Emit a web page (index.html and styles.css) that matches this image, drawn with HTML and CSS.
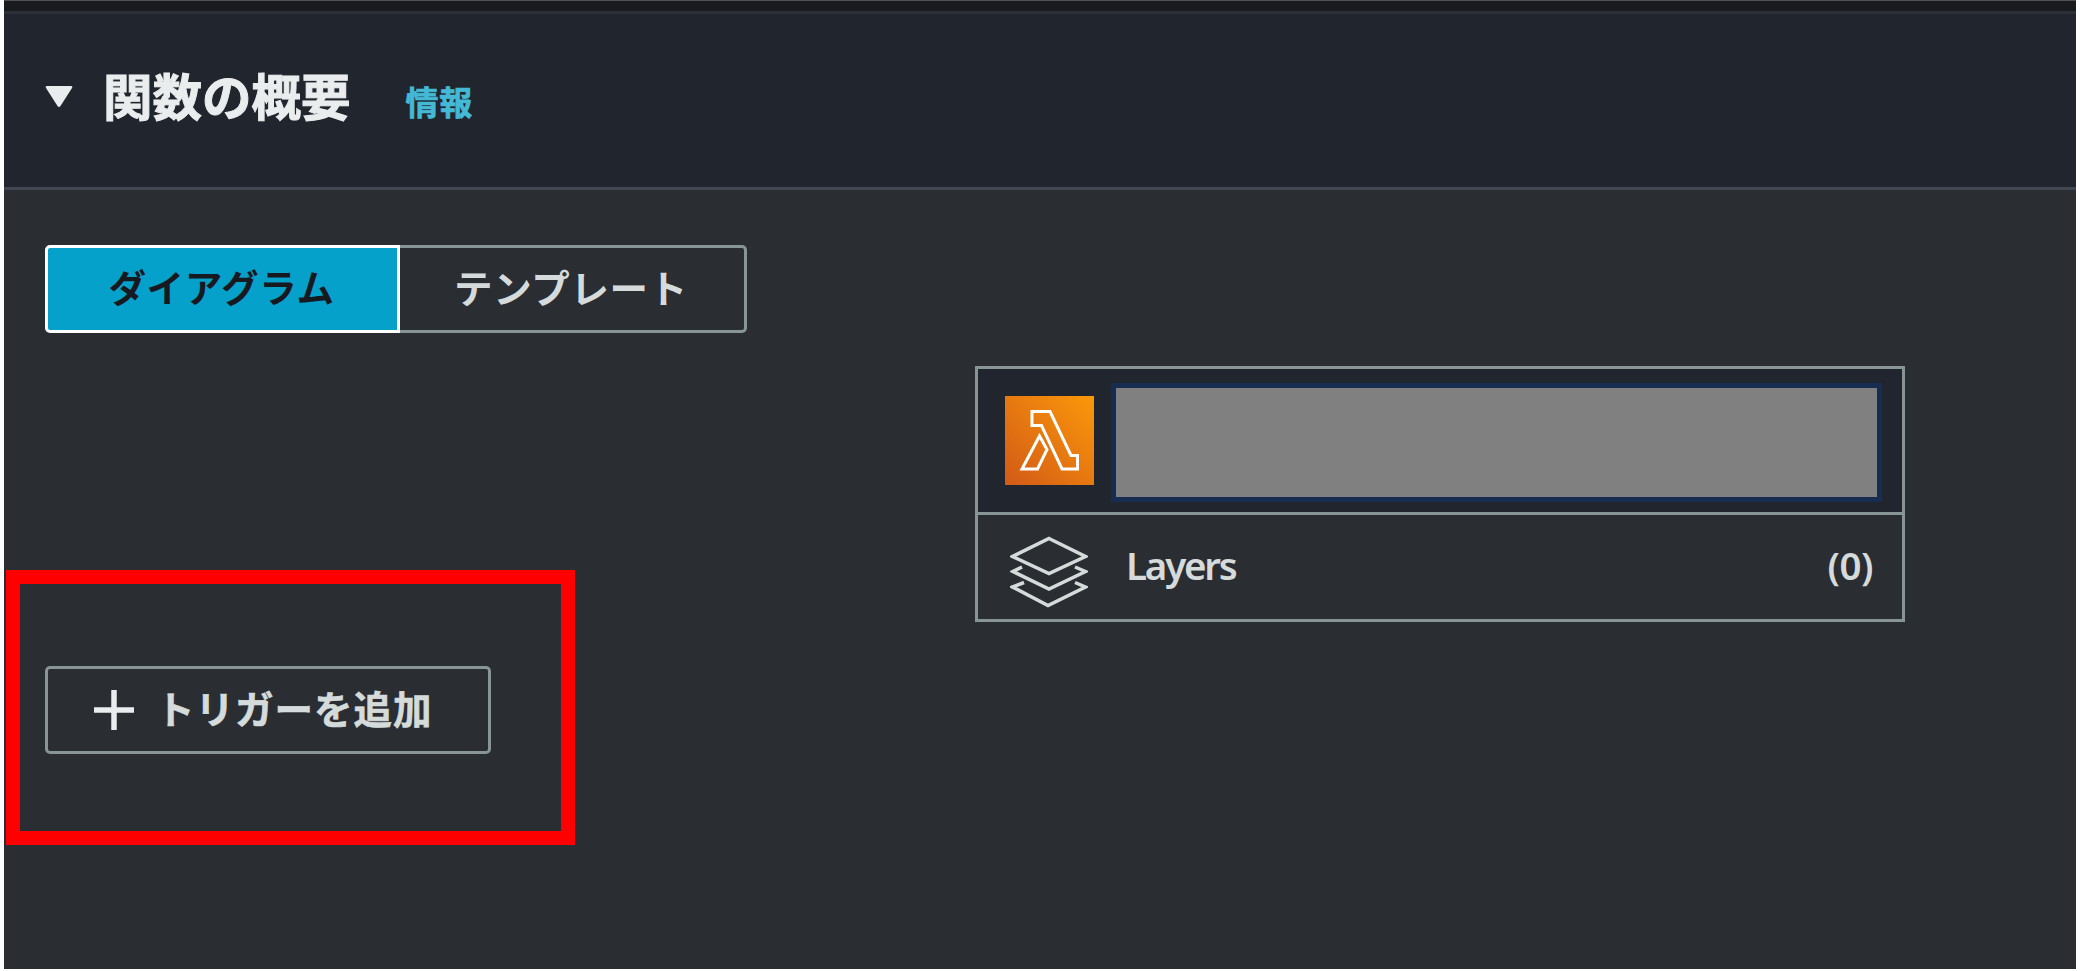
FILE: index.html
```html
<!DOCTYPE html>
<html lang="ja">

  <head>
    <meta charset="UTF-8">
    <meta name="viewport" content="width=device-width,initial-scale=1.0">
    <title>関数の概要</title>
    <link rel="stylesheet" href="styles.css">
  </head>

  <body>

    <div class="panel">

      <header class="panel-header">
        <svg class="arrow" viewBox="0 0 28 24"><path d="M2 1h24q2 0 1 2L15.500 21q-1.500 2-3 0L1 3q-1-2 1-2z"/></svg>
        <h2>関数の概要</h2>
        <a class="info">情報</a>
      </header>

      <main class="content">

        <div class="tabs">
          <button class="tab active">ダイアグラム</button>
          <button class="tab">テンプレート</button>
        </div>

        <div class="function-card">
          <div class="function-row">
            <svg class="lambda" viewBox="0 0 89 89">
              <defs>
                <linearGradient id="orange" x1="0" y1="1" x2="1" y2="0">
                  <stop offset="0" stop-color="#d25a17"/>
                  <stop offset="1" stop-color="#fb980a"/>
                </linearGradient>
              </defs>
              <rect width="89" height="89" fill="url(#orange)"/>
              <path class="line" d="M27 15.500h18L66 59.500h6.500V73H57L36.500 29.500H27zM34.500 40L17 73h15.500L42 53.500z"/>
            </svg>
            <div class="function-name"></div>
          </div>
          <div class="layers-row">
            <svg class="layers" viewBox="0 0 78 72">
              <path d="M39 2.500L75.500 20.500L39 37.500L2.500 20.500z"/>
              <path d="M12 31L3 35.500L39 53L75.500 35.500L65 31"/>
              <path d="M14 46.500L2.500 51L38 69.500L75.500 51L65 46.500"/>
            </svg>
            <span class="layers-name">Layers</span>
            <span class="layers-count">(0)</span>
          </div>
        </div>

        <button class="trigger">
          <svg class="plus" viewBox="0 0 40 40"><path d="M20 0v40M0 20h40"/></svg>
          <span>トリガーを追加</span>
        </button>

      </main>

      <div class="highlight"></div>

    </div>

  </body>

</html>
```

FILE: styles.css
```css
* {
  box-sizing: border-box;
}

body {
  margin: 0;
  background: #fff;
  font-family: "Noto Sans", "Noto Sans CJK JP", sans-serif;
}

.panel {
  position: relative;
  height: 969px;
  margin: 0 4px;
  overflow: hidden;
  background: #2a2e33;
  border-top: 1px solid #505356;
}

.panel-header {
  display: flex;
  align-items: center;
  height: 189px;
  padding: 0 41px 8px;
  background: #21252e;
  border-top: 10px solid #191a1e;
  border-bottom: 3px solid #414750;
  box-shadow: inset 0 3px #2b2f36;
}

.arrow {
  width: 28px;
  height: 24px;
  margin-top: 3px;
  fill: #eaeded;
}

h2 {
  margin: 0 0 0 30px;
  font: bold 49.500px/60px "Noto Sans CJK JP", sans-serif;
  color: #eaeded;
  -webkit-text-stroke: 1px #eaeded;
}

.info {
  margin: 11px 0 0 55px;
  font: bold 33px/40px "Noto Sans CJK JP", sans-serif;
  letter-spacing: 0.700px;
  color: #44b9d6;
  -webkit-text-stroke: 0.700px #44b9d6;
}

.content {
  display: flex;
  flex-direction: column;
  align-items: flex-start;
  padding: 55px 41px 0;
}

button {
  height: 88px;
  padding: 0;
  background: none;
  border: 3px solid #879596;
  border-radius: 5px;
  font: bold 38.500px/56px "Noto Sans CJK JP", sans-serif;
  letter-spacing: 0.700px;
  color: #d5dbdb;
}

.tabs {
  display: flex;
}

.tab {
  width: 347px;
  padding: 0 2px 6px 0;
  border-left: 0;
  border-radius: 0 5px 5px 0;
}

.tab.active {
  width: 355px;
  background: #06a1cb;
  border: 3px solid #fff;
  border-radius: 5px 0 0 5px;
  font-size: 37.500px;
  color: #16191f;
}

.function-card {
  width: 930px;
  margin: 33px 0 0 930px;
  border: 3px solid #879596;
}

.function-row {
  display: flex;
  height: 146px;
  padding: 14px 20px 0 27px;
  background: #21252e;
  border-bottom: 3px solid #879596;
}

.lambda {
  width: 89px;
  height: 89px;
  margin: 13px 17px 0 0;
}

.line {
  fill: none;
  stroke: #fff;
  stroke-width: 3;
}

.function-name {
  flex: 1;
  height: 119px;
  background: #808080;
  border: 5px solid #172c51;
}

.layers-row {
  display: flex;
  align-items: center;
  height: 104px;
  padding: 0 29px 4px 32px;
  font-size: 38.500px;
  font-weight: 600;
  color: #d5dbdb;
}

.layers {
  width: 78px;
  height: 72px;
  margin-top: 14px;
  fill: none;
  stroke: #d5dbdb;
  stroke-width: 3.500;
}

.layers-name {
  margin-left: 38px;
  letter-spacing: -2.200px;
}

.layers-count {
  margin-left: auto;
  letter-spacing: -0.500px;
}

.trigger {
  display: flex;
  align-items: center;
  width: 446px;
  margin-top: 44px;
  padding: 0 0 0 46px;
}

.trigger span {
  margin: -6px 0 0 22px;
  letter-spacing: 1px;
  -webkit-text-stroke: 0.600px #d5dbdb;
}

.plus {
  width: 40px;
  height: 40px;
  stroke: #eaeded;
  stroke-width: 5.500;
}

.highlight {
  position: absolute;
  left: 2px;
  top: 569px;
  width: 569px;
  height: 275px;
  border: 14px solid #f00;
}
```
